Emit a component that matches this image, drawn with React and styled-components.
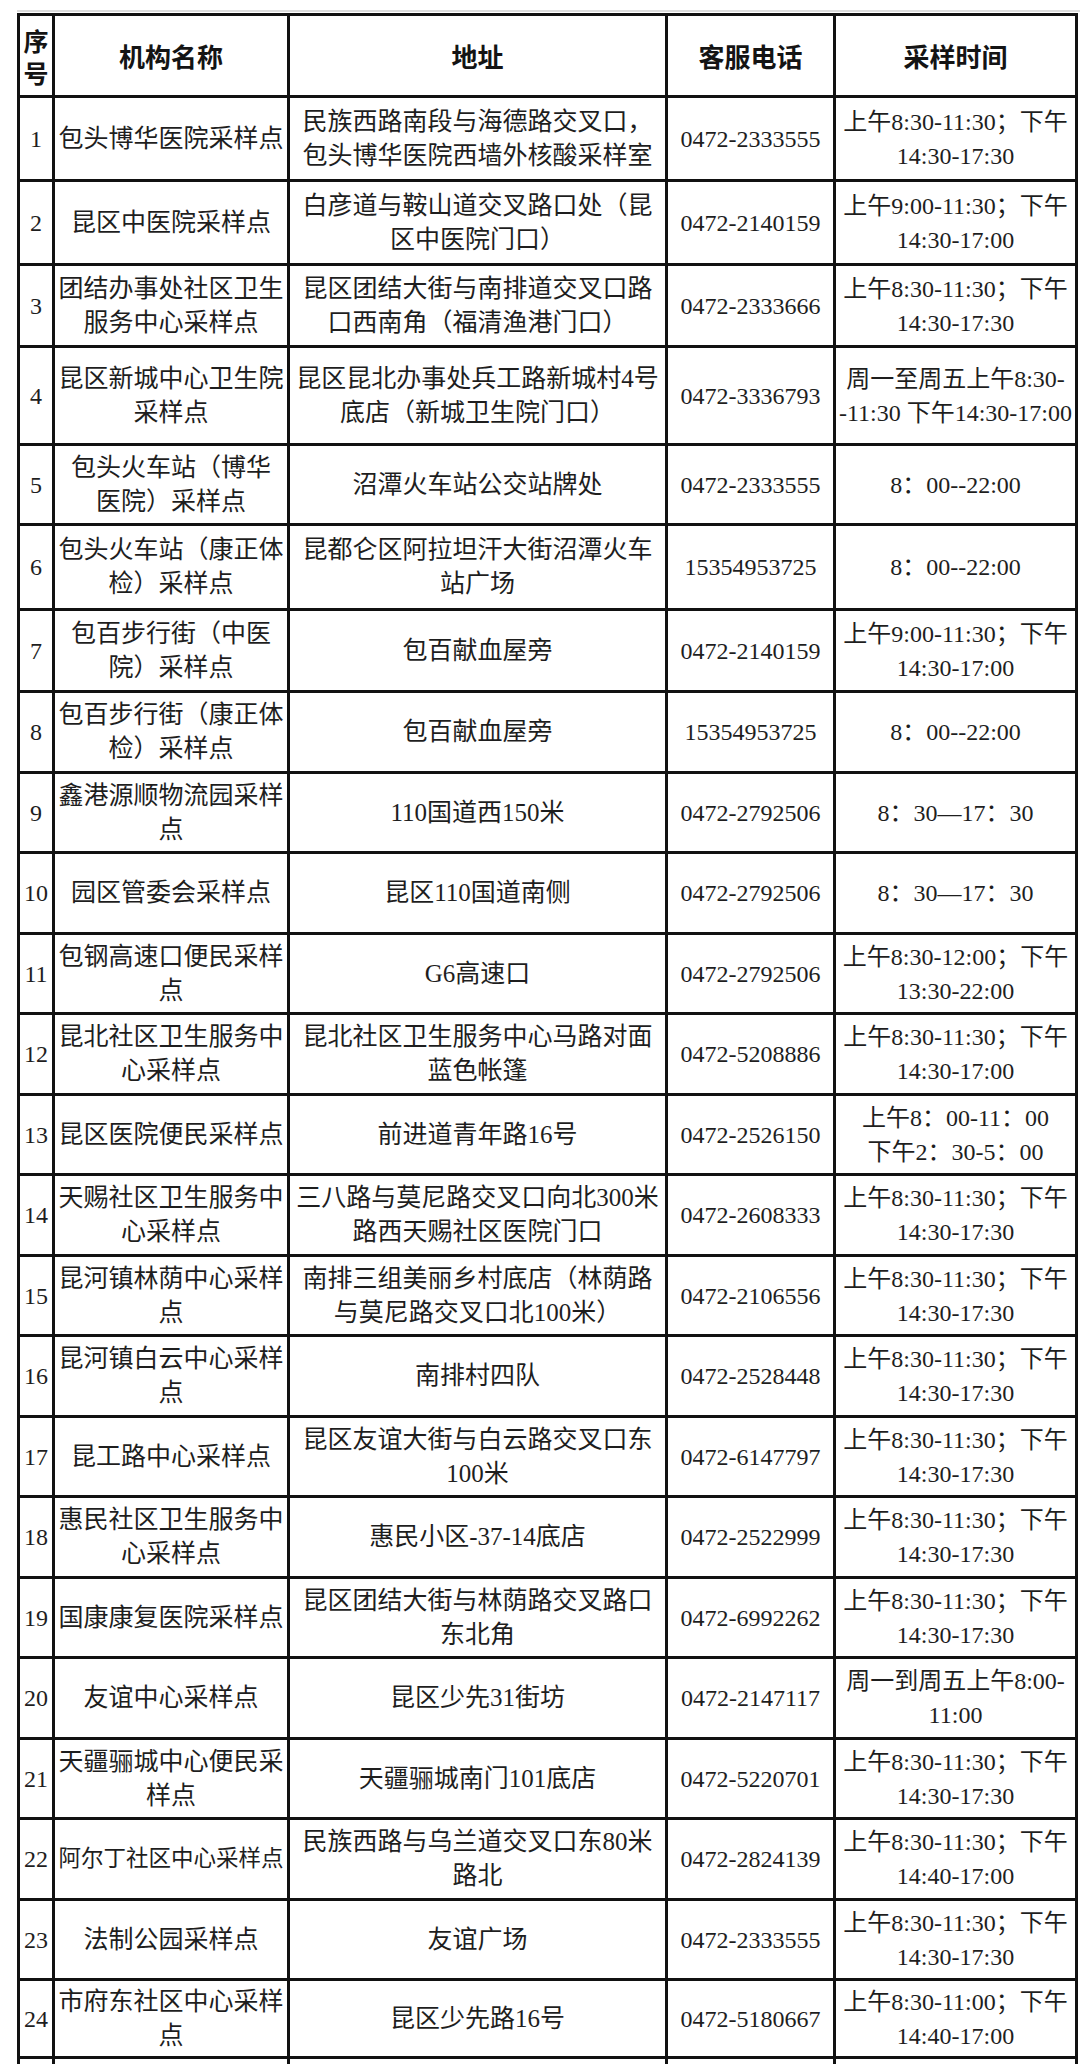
import React from 'react'
import styled, { createGlobalStyle } from 'styled-components'

const rows = [
  { no: '1', h: 84, name: ['包头博华医院采样点'], addr: ['民族西路南段与海德路交叉口，', '包头博华医院西墙外核酸采样室'], tel: '0472-2333555', time: ['上午8:30-11:30；下午', '14:30-17:30'] },
  { no: '2', h: 84, name: ['昆区中医院采样点'], addr: ['白彦道与鞍山道交叉路口处（昆', '区中医院门口）'], tel: '0472-2140159', time: ['上午9:00-11:30；下午', '14:30-17:00'] },
  { no: '3', h: 82, name: ['团结办事处社区卫生', '服务中心采样点'], addr: ['昆区团结大街与南排道交叉口路', '口西南角（福清渔港门口）'], tel: '0472-2333666', time: ['上午8:30-11:30；下午', '14:30-17:30'] },
  { no: '4', h: 98, name: ['昆区新城中心卫生院', '采样点'], addr: ['昆区昆北办事处兵工路新城村4号', '底店（新城卫生院门口）'], tel: '0472-3336793', time: ['周一至周五上午8:30-', '-11:30 下午14:30-17:00'] },
  { no: '5', h: 80, name: ['包头火车站（博华', '医院）采样点'], addr: ['沼潭火车站公交站牌处'], tel: '0472-2333555', time: ['8：00--22:00'] },
  { no: '6', h: 85, name: ['包头火车站（康正体', '检）采样点'], addr: ['昆都仑区阿拉坦汗大街沼潭火车', '站广场'], tel: '15354953725', time: ['8：00--22:00'] },
  { no: '7', h: 82, name: ['包百步行街（中医', '院）采样点'], addr: ['包百献血屋旁'], tel: '0472-2140159', time: ['上午9:00-11:30；下午', '14:30-17:00'] },
  { no: '8', h: 81, name: ['包百步行街（康正体', '检）采样点'], addr: ['包百献血屋旁'], tel: '15354953725', time: ['8：00--22:00'] },
  { no: '9', h: 80, name: ['鑫港源顺物流园采样', '点'], addr: ['110国道西150米'], tel: '0472-2792506', time: ['8：30—17：30'] },
  { no: '10', h: 81, name: ['园区管委会采样点'], addr: ['昆区110国道南侧'], tel: '0472-2792506', time: ['8：30—17：30'] },
  { no: '11', h: 80, name: ['包钢高速口便民采样', '点'], addr: ['G6高速口'], tel: '0472-2792506', time: ['上午8:30-12:00；下午', '13:30-22:00'] },
  { no: '12', h: 81, name: ['昆北社区卫生服务中', '心采样点'], addr: ['昆北社区卫生服务中心马路对面', '蓝色帐篷'], tel: '0472-5208886', time: ['上午8:30-11:30；下午', '14:30-17:00'] },
  { no: '13', h: 80, name: ['昆区医院便民采样点'], addr: ['前进道青年路16号'], tel: '0472-2526150', time: ['上午8：00-11：00', '下午2：30-5：00'] },
  { no: '14', h: 81, name: ['天赐社区卫生服务中', '心采样点'], addr: ['三八路与莫尼路交叉口向北300米', '路西天赐社区医院门口'], tel: '0472-2608333', time: ['上午8:30-11:30；下午', '14:30-17:30'] },
  { no: '15', h: 80, name: ['昆河镇林荫中心采样', '点'], addr: ['南排三组美丽乡村底店（林荫路', '与莫尼路交叉口北100米）'], tel: '0472-2106556', time: ['上午8:30-11:30；下午', '14:30-17:30'] },
  { no: '16', h: 81, name: ['昆河镇白云中心采样', '点'], addr: ['南排村四队'], tel: '0472-2528448', time: ['上午8:30-11:30；下午', '14:30-17:30'] },
  { no: '17', h: 80, name: ['昆工路中心采样点'], addr: ['昆区友谊大街与白云路交叉口东', '100米'], tel: '0472-6147797', time: ['上午8:30-11:30；下午', '14:30-17:30'] },
  { no: '18', h: 81, name: ['惠民社区卫生服务中', '心采样点'], addr: ['惠民小区-37-14底店'], tel: '0472-2522999', time: ['上午8:30-11:30；下午', '14:30-17:30'] },
  { no: '19', h: 80, name: ['国康康复医院采样点'], addr: ['昆区团结大街与林荫路交叉路口', '东北角'], tel: '0472-6992262', time: ['上午8:30-11:30；下午', '14:30-17:30'] },
  { no: '20', h: 81, name: ['友谊中心采样点'], addr: ['昆区少先31街坊'], tel: '0472-2147117', time: ['周一到周五上午8:00-', '11:00'] },
  { no: '21', h: 80, name: ['天疆骊城中心便民采', '样点'], addr: ['天疆骊城南门101底店'], tel: '0472-5220701', time: ['上午8:30-11:30；下午', '14:30-17:30'] },
  { no: '22', h: 81, name: ['阿尔丁社区中心采样点'], tight: true, addr: ['民族西路与乌兰道交叉口东80米', '路北'], tel: '0472-2824139', time: ['上午8:30-11:30；下午', '14:40-17:00'] },
  { no: '23', h: 80, name: ['法制公园采样点'], addr: ['友谊广场'], tel: '0472-2333555', time: ['上午8:30-11:30；下午', '14:30-17:30'] },
  { no: '24', h: 78, name: ['市府东社区中心采样', '点'], addr: ['昆区少先路16号'], tel: '0472-5180667', time: ['上午8:30-11:00；下午', '14:40-17:00'] },
]

const GlobalStyle = createGlobalStyle`
  body {
    margin: 0;
    background: #ffffff;
  }
`

const Page = styled.div`
  width: 1080px;
  height: 2064px;
  overflow: hidden;
  background: #ffffff;
  box-sizing: border-box;
  padding: 10px 0 0 17px;
`

const TopRule = styled.div`
  width: 1063px;
  height: 2px;
  margin-bottom: 1px;
  background: #dcdcdc;
`

const Table = styled.table`
  width: 1061px;
  table-layout: fixed;
  border-collapse: separate;
  border-spacing: 0;
  border-top: 3px solid #111;
  border-left: 3px solid #111;
  font-family: 'Liberation Serif', 'Noto Sans CJK SC', serif;
  color: #1e1e1e;
`

const Row = styled.tr`
  height: ${(props) => props.$h}px;
`

const HeadCell = styled.th`
  border-right: 3px solid #111;
  border-bottom: 3px solid #111;
  padding: 0;
  text-align: center;
  vertical-align: middle;
  font-family: 'Noto Sans CJK SC', sans-serif;
  font-weight: 700;
  font-size: ${(props) => (props.$narrow ? 25 : 26)}px;
  line-height: ${(props) => (props.$narrow ? 32 : 34)}px;
  color: #141414;
  white-space: nowrap;
`

// $size: text size for the cell (CJK-heavy cells run a bit larger)
const Cell = styled.td`
  border-right: 3px solid #111;
  border-bottom: 3px solid #111;
  padding: 0;
  text-align: center;
  vertical-align: middle;
  font-size: ${(props) => props.$size || 24}px;
  line-height: 34px;
  white-space: nowrap;
  overflow: visible;
`

const Line = styled.div`
  white-space: nowrap;
`

function Lines({ items }) {
  return items.map((t, i) => <Line key={i}>{t}</Line>)
}

export default function App() {
  return (
    <Page>
      <GlobalStyle />
      <TopRule />
      <Table>
        <colgroup>
          <col style={{ width: 35 }} />
          <col style={{ width: 235 }} />
          <col style={{ width: 378 }} />
          <col style={{ width: 168 }} />
          <col style={{ width: 242 }} />
        </colgroup>
        <thead>
          <Row $h={82}>
            <HeadCell $narrow>
              <Line>序</Line>
              <Line>号</Line>
            </HeadCell>
            <HeadCell>机构名称</HeadCell>
            <HeadCell>地址</HeadCell>
            <HeadCell>客服电话</HeadCell>
            <HeadCell>采样时间</HeadCell>
          </Row>
        </thead>
        <tbody>
          {rows.map((r) => (
            <Row key={r.no} $h={r.h}>
              <Cell>{r.no}</Cell>
              <Cell $size={r.tight ? 22.5 : 25}>
                <Lines items={r.name} />
              </Cell>
              <Cell $size={25}>
                <Lines items={r.addr} />
              </Cell>
              <Cell>{r.tel}</Cell>
              <Cell>
                <Lines items={r.time} />
              </Cell>
            </Row>
          ))}
          <Row $h={60}>
            <Cell />
            <Cell />
            <Cell />
            <Cell />
            <Cell />
          </Row>
        </tbody>
      </Table>
    </Page>
  )
}
